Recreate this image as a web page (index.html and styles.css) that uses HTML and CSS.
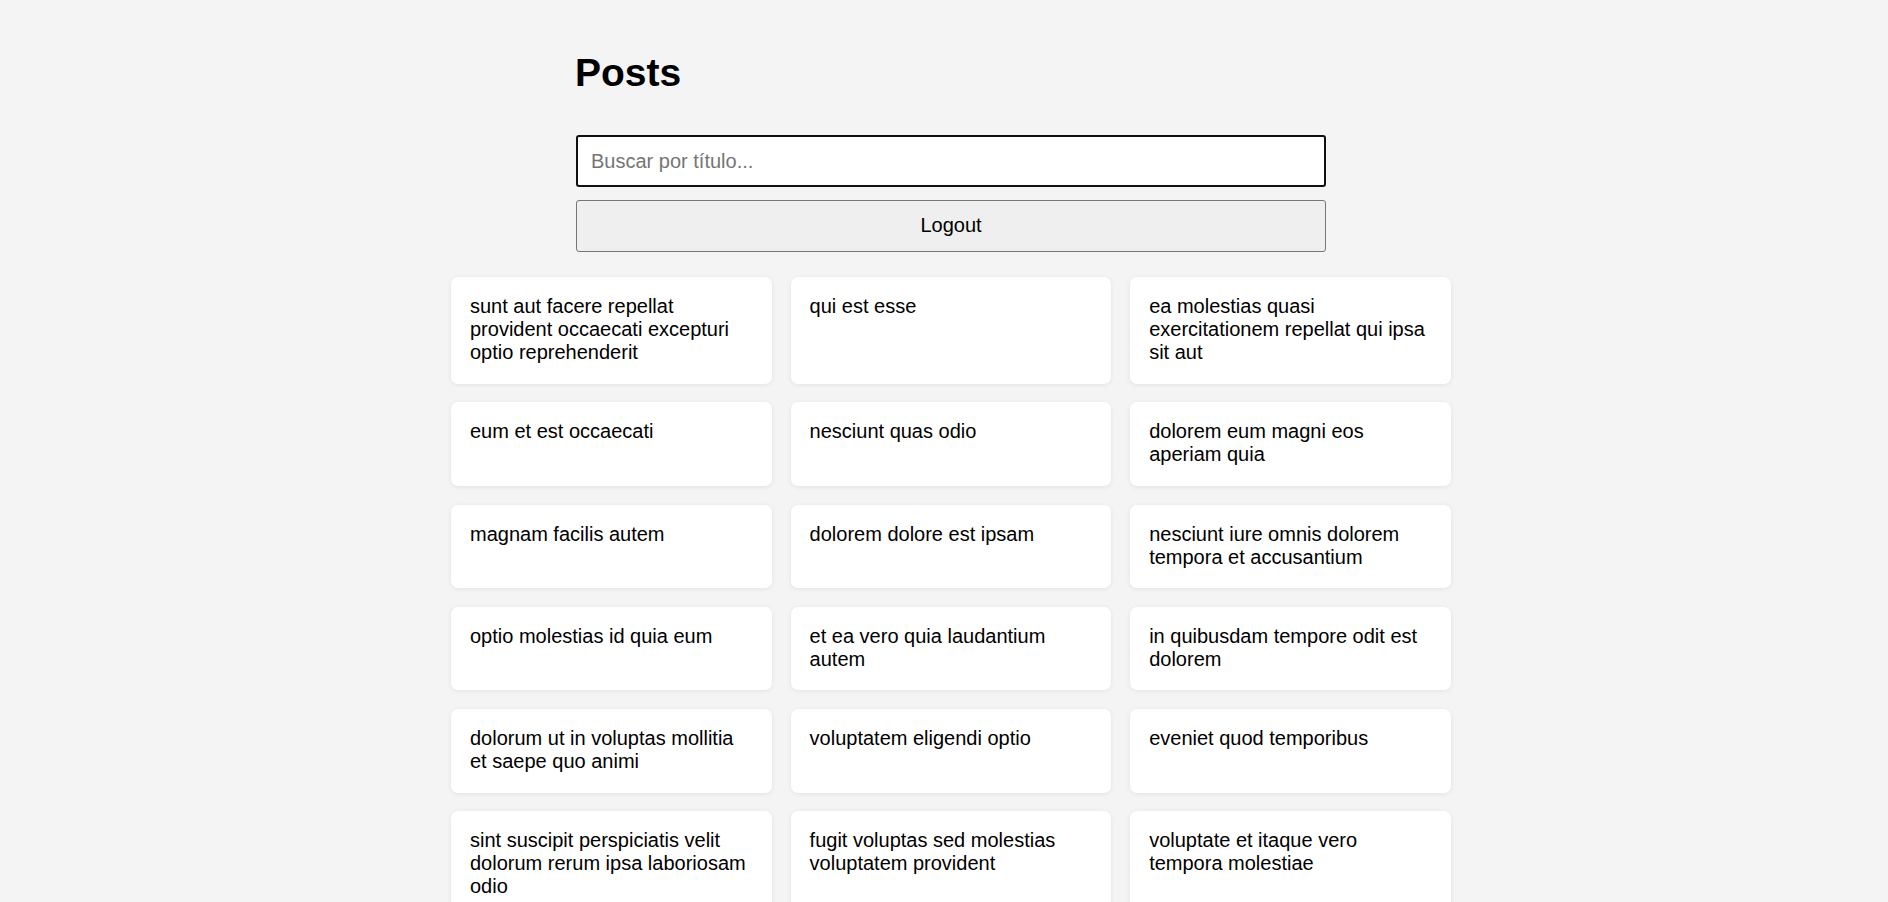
FILE: index.html
```html
<!DOCTYPE html>
<html lang="es">
<head>
<meta charset="utf-8">
<title>Posts</title>
<link rel="stylesheet" href="styles.css">
</head>
<body>
<div class="app">
  <div class="page">
    <header class="top">
      <h1 class="title">Posts</h1>
      <input class="search" type="text" placeholder="Buscar por título...">
      <button class="logout" type="button">Logout</button>
    </header>
    <main class="grid">
      <div class="card">sunt aut facere repellat provident occaecati excepturi optio reprehenderit</div>
      <div class="card">qui est esse</div>
      <div class="card">ea molestias quasi exercitationem repellat qui ipsa sit aut</div>
      <div class="card">eum et est occaecati</div>
      <div class="card">nesciunt quas odio</div>
      <div class="card">dolorem eum magni eos aperiam quia</div>
      <div class="card">magnam facilis autem</div>
      <div class="card">dolorem dolore est ipsam</div>
      <div class="card">nesciunt iure omnis dolorem tempora et accusantium</div>
      <div class="card">optio molestias id quia eum</div>
      <div class="card">et ea vero quia laudantium autem</div>
      <div class="card">in quibusdam tempore odit est dolorem</div>
      <div class="card">dolorum ut in voluptas mollitia et saepe quo animi</div>
      <div class="card">voluptatem eligendi optio</div>
      <div class="card">eveniet quod temporibus</div>
      <div class="card">sint suscipit perspiciatis velit dolorum rerum ipsa laboriosam odio</div>
      <div class="card">fugit voluptas sed molestias voluptatem provident</div>
      <div class="card">voluptate et itaque vero tempora molestiae</div>
      <div class="card">adipisci placeat illum aut reiciendis qui</div>
      <div class="card">doloribus ad provident suscipit at</div>
      <div class="card">asperiores ea ipsam voluptatibus modi minima quia sint</div>
      <div class="card">dolor sint quo a velit explicabo quia nam</div>
      <div class="card">maxime id vitae nihil numquam</div>
      <div class="card">autem hic labore sunt dolores incidunt</div>
    </main>
  </div>
</div>
</body>
</html>
```

FILE: styles.css
```css
html, body {
  margin: 0;
  padding: 0;
  background: #f4f4f4;
}

body {
  font-family: "Liberation Sans", Arial, sans-serif;
  font-size: 20px;
  color: #000;
}

.app {
  padding: 50px 0 40px 14px;
}

.page {
  width: 1000px;
  margin: 0 auto;
}

.top {
  width: 750px;
  margin: 0 auto;
  display: flex;
  flex-direction: column;
}

.title {
  margin: 0 0 39px -1px;
  font-size: 39px;
  line-height: 46px;
  font-weight: bold;
}

.search {
  box-sizing: border-box;
  height: 52px;
  width: 100%;
  margin: 0 0 13px;
  padding: 0 13px;
  border: 2px solid #101010;
  border-radius: 3px;
  background: #fff;
  font-family: "Liberation Sans", Arial, sans-serif;
  font-size: 20px;
  color: #000;
  outline: none;
}

.search::placeholder {
  color: #757575;
}

.logout {
  box-sizing: border-box;
  height: 52px;
  width: 100%;
  margin: 0;
  padding: 0 0 2px;
  border: 1px solid #767676;
  border-radius: 3px;
  background: #efefef;
  font-family: "Liberation Sans", Arial, sans-serif;
  font-size: 20px;
  color: #000;
}

.grid {
  margin-top: 25px;
  display: grid;
  grid-template-columns: repeat(3, 1fr);
  gap: 18.75px;
}

.card {
  background: #fff;
  border-radius: 7px;
  padding: 18px 19px 19.5px;
  line-height: 23px;
  box-shadow: 0 1px 5px rgba(0, 0, 0, 0.08);
}
```
